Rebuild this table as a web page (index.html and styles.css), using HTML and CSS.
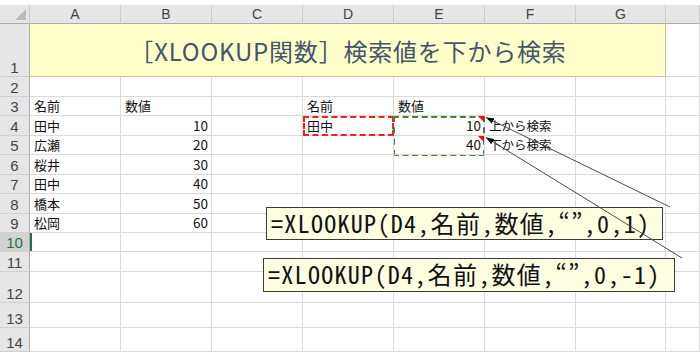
FILE: index.html
```html
<!DOCTYPE html>
<html lang="ja">
<head>
<meta charset="utf-8">
<link rel="stylesheet" href="styles.css">
</head>
<body>
<div class="sheet">
  <div class="grid">
    <div class="corner"></div>
    <div class="ch">A</div><div class="ch">B</div><div class="ch">C</div><div class="ch">D</div><div class="ch">E</div><div class="ch">F</div><div class="ch">G</div><div class="ch ch-last"></div>

    <div class="rh">1</div>
    <div class="title">［XLOOKUP関数］検索値を下から検索</div>
    <div class="c"></div>

    <div class="rh">2</div>
    <div class="c"></div><div class="c"></div><div class="c"></div><div class="c"></div><div class="c"></div><div class="c"></div><div class="c"></div><div class="c"></div>

    <div class="rh">3</div>
    <div class="c">名前</div><div class="c">数値</div><div class="c"></div><div class="c">名前</div><div class="c">数値</div><div class="c"></div><div class="c"></div><div class="c"></div>

    <div class="rh">4</div>
    <div class="c">田中</div><div class="c num">10</div><div class="c"></div>
    <div class="c ants-red">田中</div>
    <div class="c num has-note"><span class="ants-green"></span>10</div>
    <div class="c note-text">上から検索</div><div class="c"></div><div class="c"></div>

    <div class="rh">5</div>
    <div class="c">広瀬</div><div class="c num">20</div><div class="c"></div><div class="c"></div>
    <div class="c num has-note">40</div>
    <div class="c note-text">下から検索</div><div class="c"></div><div class="c"></div>

    <div class="rh">6</div>
    <div class="c">桜井</div><div class="c num">30</div><div class="c"></div><div class="c"></div><div class="c"></div><div class="c"></div><div class="c"></div><div class="c"></div>

    <div class="rh">7</div>
    <div class="c">田中</div><div class="c num">40</div><div class="c"></div><div class="c"></div><div class="c"></div><div class="c"></div><div class="c"></div><div class="c"></div>

    <div class="rh">8</div>
    <div class="c">橋本</div><div class="c num">50</div><div class="c"></div><div class="c"></div><div class="c"></div><div class="c"></div><div class="c"></div><div class="c"></div>

    <div class="rh">9</div>
    <div class="c">松岡</div><div class="c num">60</div><div class="c"></div><div class="c"></div><div class="c"></div><div class="c"></div><div class="c"></div><div class="c"></div>

    <div class="rh rh-active">10</div>
    <div class="c c-active"></div><div class="c"></div><div class="c"></div><div class="c"></div><div class="c"></div><div class="c"></div><div class="c"></div><div class="c"></div>

    <div class="rh">11</div>
    <div class="c"></div><div class="c"></div><div class="c"></div><div class="c"></div><div class="c"></div><div class="c"></div><div class="c"></div><div class="c"></div>

    <div class="rh">12</div>
    <div class="c"></div><div class="c"></div><div class="c"></div><div class="c"></div><div class="c"></div><div class="c"></div><div class="c"></div><div class="c"></div>

    <div class="rh">13</div>
    <div class="c"></div><div class="c"></div><div class="c"></div><div class="c"></div><div class="c"></div><div class="c"></div><div class="c"></div><div class="c"></div>

    <div class="rh">14</div>
    <div class="c"></div><div class="c"></div><div class="c"></div><div class="c"></div><div class="c"></div><div class="c"></div><div class="c"></div><div class="c"></div>
  </div>

  <svg class="arrows" width="700" height="352" viewBox="0 0 700 352">
    <defs>
      <marker id="ah" markerWidth="8" markerHeight="6" refX="0" refY="3" orient="auto" markerUnits="userSpaceOnUse">
        <path d="M0 3 L8 0 L8 6 Z" fill="#000"/>
      </marker>
    </defs>
    <line x1="486" y1="117.5" x2="670" y2="207" stroke="#4a4a4a" stroke-width="1" marker-start="url(#ah)"/>
  </svg>

  <div class="note note-1">=XLOOKUP(D4,名前,数値,“”,0,1)</div>

  <svg class="arrows" width="700" height="352" viewBox="0 0 700 352">
    <line x1="486" y1="137.5" x2="682" y2="258" stroke="#4a4a4a" stroke-width="1" marker-start="url(#ah)"/>
  </svg>

  <div class="note note-2">=XLOOKUP(D4,名前,数値,“”,0,-1)</div>
</div>
</body>
</html>
```

FILE: styles.css
```css
html, body {
  margin: 0;
  padding: 0;
  background: #ffffff;
}

.sheet {
  position: relative;
  width: 700px;
  height: 352px;
  overflow: hidden;
  padding-top: 5px;
  box-sizing: border-box;
  font-family: "Noto Sans CJK JP", sans-serif;
}

.grid {
  display: grid;
  grid-template-columns: 30px 91px 91px 91px 91px 91px 91px 90px 34px;
  grid-template-rows: 19px 53px 20px 19px 20px 19px 20px 19px 20px 19px 19px 20px 31px 25px 24px;
}

.corner {
  position: relative;
  background: #e6e6e6;
  border-right: 1px solid #c8c8c8;
  border-bottom: 1px solid #ababab;
}

.corner::after {
  content: "";
  position: absolute;
  right: 3px;
  bottom: 3px;
  width: 0;
  height: 0;
  border-left: 11px solid transparent;
  border-bottom: 11px solid #bdbdbd;
}

.ch {
  background: #e6e6e6;
  border-right: 1px solid #cdcdcd;
  border-bottom: 1px solid #ababab;
  display: flex;
  align-items: center;
  justify-content: center;
  font-family: "Liberation Sans", sans-serif;
  font-size: 14px;
  color: #444444;
}

.rh {
  background: #e6e6e6;
  border-right: 1px solid #ababab;
  border-bottom: 1px solid #d0d0d0;
  display: flex;
  align-items: flex-end;
  justify-content: center;
  font-family: "Liberation Sans", sans-serif;
  font-size: 15px;
  line-height: 17px;
  color: #444444;
  box-sizing: border-box;
}

.rh-active {
  background: #d2d2d2;
  color: #217346;
}

.c {
  position: relative;
  box-sizing: border-box;
  border-right: 1px solid #dadada;
  border-bottom: 1px solid #dadada;
  display: flex;
  align-items: flex-end;
  padding: 0 3px 1px 4px;
  font-size: 13px;
  line-height: 17px;
  color: #111111;
  white-space: nowrap;
  min-width: 0;
}

.c-active {
  box-shadow: inset 2px 0 0 #217346;
}

.num {
  justify-content: flex-end;
  font-size: 13.5px;
}

.note-text {
  font-size: 12.5px;
  padding-left: 4px;
}

.title {
  grid-column: span 7;
  background: #ffffcc;
  border-right: 1px solid #c9c39a;
  border-bottom: 1px solid #c9c39a;
  display: flex;
  align-items: center;
  justify-content: center;
  padding-left: 1px;
  padding-top: 1px;
  font-size: 24px;
  letter-spacing: 0.8px;
  color: #44546a;
  white-space: nowrap;
}

.ants-red {
  outline: 2px dashed #ff1a1a;
  outline-offset: -2px;
}

.ants-green {
  position: absolute;
  left: -1px;
  top: 0;
  width: 92px;
  height: 40px;
  box-sizing: border-box;
  border: 2px dashed #4f7f33;
  pointer-events: none;
}

.has-note::after {
  content: "";
  position: absolute;
  top: 0;
  right: 0;
  width: 0;
  height: 0;
  border-left: 6px solid transparent;
  border-top: 6px solid #ff0000;
}

.arrows {
  position: absolute;
  left: 0;
  top: 0;
  pointer-events: none;
}

.note {
  position: absolute;
  box-sizing: border-box;
  background: #ffffe1;
  border: 1px solid #3c3c3c;
  font-family: "Noto Sans Mono CJK JP", "Noto Sans CJK JP", monospace;
  font-size: 24px;
  line-height: 30px;
  letter-spacing: 1.3px;
  color: #111111;
  padding-left: 4px;
  white-space: nowrap;
}

.note-1 {
  left: 266px;
  top: 207px;
  width: 397px;
  height: 33px;
}

.note-2 {
  left: 263px;
  top: 258px;
  width: 412px;
  height: 34px;
}
```
